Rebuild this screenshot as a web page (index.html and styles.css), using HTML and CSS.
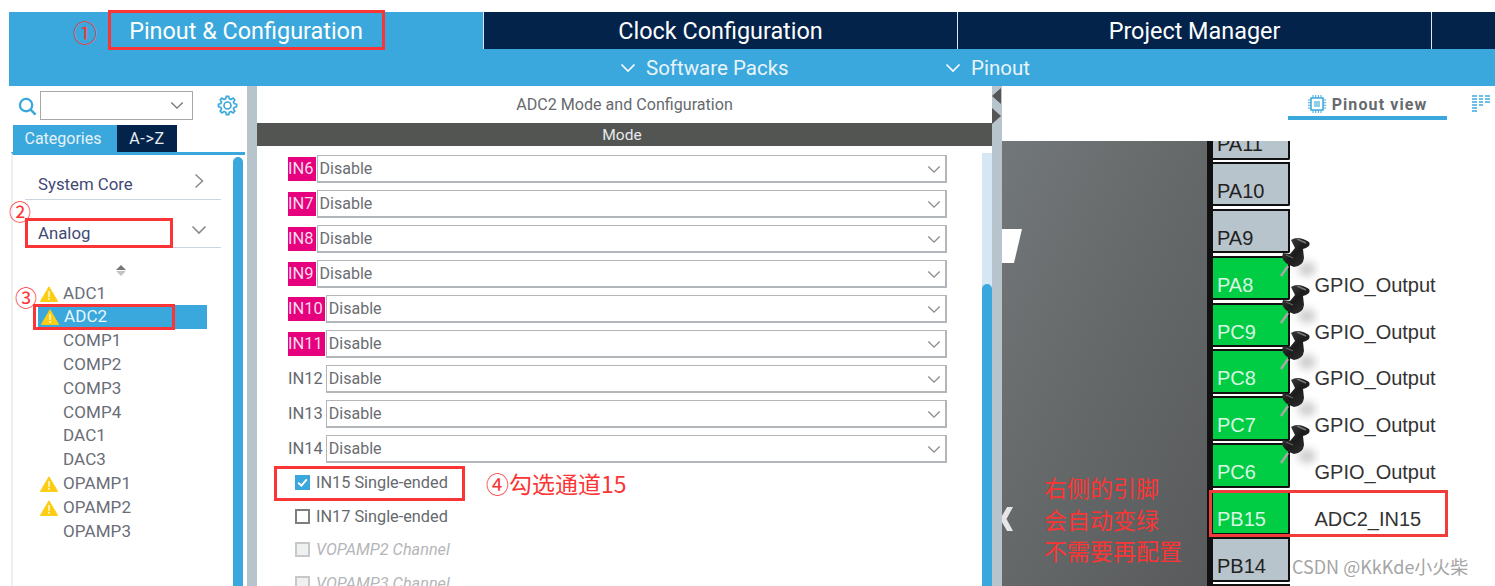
FILE: index.html
```html
<!DOCTYPE html>
<html lang="en">
<head>
<meta charset="utf-8">
<title>ADC2 Mode and Configuration</title>
<link rel="stylesheet" href="styles.css">
</head>
<body>
<svg class="defs" width="0" height="0" aria-hidden="true">
  <defs>
    <symbol id="chev" viewBox="0 0 16 10"><path d="M1.5 1.5 8 8l6.5-6.5" fill="none" stroke="currentColor" stroke-width="1.6"/></symbol>
    <symbol id="warn" viewBox="0 0 18 16"><path d="M9 .8 17.6 15.4H.4Z" fill="#fbcd14" stroke="#fbcd14" stroke-linejoin="round"/><rect x="8.1" y="5" width="1.8" height="6" fill="#fff3b8"/><rect x="8.1" y="12" width="1.8" height="1.8" fill="#fff3b8"/></symbol>
    <filter id="soft" x="-80%" y="-80%" width="260%" height="260%"><feGaussianBlur stdDeviation="4"/></filter>
    <linearGradient id="pinshade" x1="0" y1="0" x2="1" y2="1"><stop offset="0" stop-color="#4a4a4a"/><stop offset=".5" stop-color="#1c1c1c"/><stop offset="1" stop-color="#333"/></linearGradient>
    <symbol id="pushpin" viewBox="0 0 44 54">
      <ellipse cx="31" cy="33" rx="9" ry="7" fill="#8a8a8a" opacity=".45" filter="url(#soft)"/>
      <path d="M12 30 5 40" stroke="#a8a8a8" stroke-width="2.4"/>
      <path d="M15 4Q22-1 33 6Q35 10 30 12L27 13L28 22Q27 30 18 31Q8 28 6 21L7 17L14 18L19 12Z" fill="url(#pinshade)"/>
      <path d="M21 3 30 7" stroke="#777" stroke-width="1.4"/>
      <path d="M10 19 17 22" stroke="#666" stroke-width="1.2"/>
    </symbol>
  </defs>
</svg>

<header class="topbar">
  <nav class="tabs">
    <div class="tab tab-active">Pinout &amp; Configuration</div>
    <div class="tab tab-clock">Clock Configuration</div>
    <div class="tab tab-project">Project Manager</div>
    <div class="tab tab-rest"></div>
  </nav>
  <div class="subbar">
    <div class="sub sub-packs"><svg class="sub-chev"><use href="#chev"/></svg>Software Packs</div>
    <div class="sub"><svg class="sub-chev"><use href="#chev"/></svg>Pinout</div>
  </div>
</header>

<main class="main">
  <aside class="side">
    <div class="search">
      <svg class="search-icon" viewBox="0 0 20 20"><circle cx="8.500" cy="8.500" r="6.500" fill="none" stroke="#3aa8dc" stroke-width="2.400"/><path d="m13 13 5.500 5.500" stroke="#3aa8dc" stroke-width="2.600"/></svg>
      <div class="combo"><svg class="combo-chev"><use href="#chev"/></svg></div>
      <svg class="gear" viewBox="0 0 24 24"><path d="M12 1.500l1.300 0 .7 2.800 1.900.8 2.500-1.500 1.900 1.900-1.500 2.500.8 1.900 2.800.7v2.800l-2.800.7-.8 1.900 1.500 2.500-1.900 1.900-2.500-1.500-1.900.8-.7 2.800h-2.600l-.7-2.800-1.900-.8-2.500 1.500-1.900-1.900 1.500-2.500-.8-1.900-2.800-.7v-2.800l2.800-.7.800-1.900-1.500-2.500 1.900-1.900 2.500 1.500 1.900-.8.700-2.800Z" fill="none" stroke="#3aa8dc" stroke-width="1.900"/><circle cx="12" cy="12" r="4" fill="none" stroke="#3aa8dc" stroke-width="1.900"/></svg>
    </div>
    <div class="cat-tabs">
      <div class="cat cat-on">Categories</div>
      <div class="cat cat-off">A-&gt;Z</div>
    </div>
    <div class="side-body">
      <div class="side-list">
        <div class="group group-core">System Core<svg class="group-right" viewBox="0 0 10 16"><path d="M1.500 1.500 8.500 8l-7 6.500" fill="none" stroke="#8a8a8a" stroke-width="1.500"/></svg></div>
        <div class="group group-analog">Analog<svg class="group-down"><use href="#chev"/></svg></div>
        <div class="sorter"><span class="sort-up"></span><span class="sort-down"></span></div>
        <ul class="items">
          <li class="item"><svg class="warn"><use href="#warn"/></svg>ADC1</li>
          <li class="item item-on"><svg class="warn"><use href="#warn"/></svg>ADC2</li>
          <li class="item">COMP1</li>
          <li class="item">COMP2</li>
          <li class="item">COMP3</li>
          <li class="item">COMP4</li>
          <li class="item">DAC1</li>
          <li class="item">DAC3</li>
          <li class="item"><svg class="warn"><use href="#warn"/></svg>OPAMP1</li>
          <li class="item"><svg class="warn"><use href="#warn"/></svg>OPAMP2</li>
          <li class="item">OPAMP3</li>
        </ul>
      </div>
      <div class="side-scroll"></div>
    </div>
  </aside>

  <div class="gutter"></div>

  <section class="center">
    <h1 class="center-title">ADC2 Mode and Configuration</h1>
    <div class="mode-bar">Mode</div>
    <div class="mode-body">
      <div class="rows">
        <div class="row"><span class="in in-pink">IN6</span><div class="select">Disable<svg class="sel-chev"><use href="#chev"/></svg></div></div>
        <div class="row"><span class="in in-pink">IN7</span><div class="select">Disable<svg class="sel-chev"><use href="#chev"/></svg></div></div>
        <div class="row"><span class="in in-pink">IN8</span><div class="select">Disable<svg class="sel-chev"><use href="#chev"/></svg></div></div>
        <div class="row"><span class="in in-pink">IN9</span><div class="select">Disable<svg class="sel-chev"><use href="#chev"/></svg></div></div>
        <div class="row"><span class="in in-pink">IN10</span><div class="select">Disable<svg class="sel-chev"><use href="#chev"/></svg></div></div>
        <div class="row"><span class="in in-pink">IN11</span><div class="select">Disable<svg class="sel-chev"><use href="#chev"/></svg></div></div>
        <div class="row"><span class="in">IN12</span><div class="select">Disable<svg class="sel-chev"><use href="#chev"/></svg></div></div>
        <div class="row"><span class="in">IN13</span><div class="select">Disable<svg class="sel-chev"><use href="#chev"/></svg></div></div>
        <div class="row"><span class="in">IN14</span><div class="select">Disable<svg class="sel-chev"><use href="#chev"/></svg></div></div>
        <div class="check check-first"><span class="box box-on"><svg viewBox="0 0 14 14"><path d="M3 7.200 6 10l5-6" fill="none" stroke="#fff" stroke-width="1.800"/></svg></span>IN15 Single-ended</div>
        <div class="check"><span class="box"></span>IN17 Single-ended</div>
        <div class="check check-off"><span class="box box-off"></span>VOPAMP2 Channel</div>
        <div class="check check-off"><span class="box box-off"></span>VOPAMP3 Channel</div>
      </div>
      <div class="mode-scroll"><div class="mode-thumb"></div></div>
    </div>
  </section>

  <div class="gutter gutter-right">
    <span class="arrow-left"></span>
    <span class="arrow-right"></span>
  </div>

  <section class="pinout">
    <div class="pinout-head">
      <div class="view-tab">
        <svg class="chip-icon" viewBox="0 0 18 18"><rect x="3" y="3" width="12" height="12" fill="none" stroke="#3aa8dc" stroke-width="1.500"/><rect x="6" y="6" width="6" height="6" fill="#8fcfee"/><path d="M5 0v3M7.700 0v3M10.300 0v3M13 0v3M5 15v3M7.700 15v3M10.300 15v3M13 15v3M0 5h3M0 7.700h3M0 10.300h3M0 13h3M15 5h3M15 7.700h3M15 10.300h3M15 13h3" stroke="#3aa8dc"/></svg>
        Pinout view
      </div>
      <svg class="list-icon" viewBox="0 0 18 18"><path d="M0 1h5M7 1h4M13 1h5M0 4h5M7 4h4M13 4h5M0 7h5M7 7h4M13 7h5M0 10h5M7 10h4M0 13h5M0 16h5" stroke="#6cbfe8" stroke-width="2"/></svg>
    </div>
    <div class="canvas">
      <div class="chip">
        <span class="logo-piece"></span>
        <span class="chip-chevron"></span>
      </div>
      <div class="chip-edge"></div>
      <div class="pins">
        <div class="pinrow"><div class="pin">PA11</div></div>
        <div class="pinrow"><div class="pin">PA10</div></div>
        <div class="pinrow"><div class="pin">PA9</div></div>
        <div class="pinrow"><div class="pin pin-green">PA8</div><span class="signal">GPIO_Output</span><svg class="pushpin"><use href="#pushpin"/></svg></div>
        <div class="pinrow"><div class="pin pin-green">PC9</div><span class="signal">GPIO_Output</span><svg class="pushpin"><use href="#pushpin"/></svg></div>
        <div class="pinrow"><div class="pin pin-green">PC8</div><span class="signal">GPIO_Output</span><svg class="pushpin"><use href="#pushpin"/></svg></div>
        <div class="pinrow"><div class="pin pin-green">PC7</div><span class="signal">GPIO_Output</span><svg class="pushpin"><use href="#pushpin"/></svg></div>
        <div class="pinrow"><div class="pin pin-green">PC6</div><span class="signal">GPIO_Output</span><svg class="pushpin"><use href="#pushpin"/></svg></div>
        <div class="pinrow"><div class="pin pin-green">PB15</div><span class="signal">ADC2_IN15</span></div>
        <div class="pinrow"><div class="pin">PB14</div></div>
        <div class="pinrow"><div class="pin"></div></div>
      </div>
    </div>
  </section>
</main>

<div class="box-mark mark-1"></div>
<div class="box-mark mark-2"></div>
<div class="box-mark mark-3"></div>
<div class="box-mark mark-4"></div>
<div class="box-mark mark-5"></div>
<span class="note n1">①</span>
<span class="note n2">②</span>
<span class="note n3">③</span>
<span class="note n4">④勾选通道15</span>
<div class="note n5">右侧的引脚<br>会自动变绿<br>不需要再配置</div>
<div class="watermark">CSDN @KkKde小火柴</div>
</body>
</html>
```

FILE: styles.css
```css
* { box-sizing: border-box; }
html, body { margin: 0; padding: 0; }
body {
  position: relative;
  width: 1495px;
  height: 586px;
  overflow: hidden;
  background: #fff;
  font-family: Roboto, "Liberation Sans", sans-serif;
  color: #5f6368;
  padding-top: 12px;
}
.defs { position: absolute; }

/* header */
.topbar { margin-left: 9px; background: #3aa8dc; height: 74px; }
.tabs { display: flex; height: 37px; }
.tab {
  background: #03234b;
  color: #fff;
  font-size: 23.400px;
  line-height: 38px;
  text-align: center;
  border-left: 1px solid #dfe8ee;
}
.tab-active { width: 474px; background: #3aa8dc; border-left: 0; }
.tab-clock { width: 474px; }
.tab-project { width: 474px; }
.tab-rest { flex: 1; }
.subbar { display: flex; height: 37px; color: #e8f4fa; font-size: 20.500px; line-height: 38px; padding-left: 611px; }
.sub { display: flex; align-items: center; }
.sub-packs { width: 325px; }
.sub-chev { width: 16px; height: 10px; margin-right: 10px; color: #fff; }

/* layout */
.main {
  display: grid;
  grid-template-columns: 238px 10px 735px 10px 493px;
  grid-template-rows: 500px;
  margin-left: 9px;
  height: 500px;
}
.gutter { background: #b8c4cc; position: relative; }

/* sidebar */
.side { display: flex; flex-direction: column; min-width: 0; min-height: 0; overflow: hidden; }
.search { display: flex; align-items: center; height: 39px; padding-left: 9px; }
.search-icon { width: 19px; height: 19px; margin-right: 3px; margin-top: 1px; }
.combo {
  width: 153px;
  height: 29px;
  border: 1px solid #a7a7a7;
  display: flex;
  align-items: center;
  justify-content: flex-end;
  padding-right: 8px;
}
.combo-chev { width: 14px; height: 9px; color: #777; }
.gear { width: 21px; height: 21px; margin-left: 24px; }
.cat-tabs { display: flex; padding-left: 4px; height: 27px; }
.cat { height: 27px; line-height: 27px; font-size: 16px; text-align: center; }
.cat-on { width: 104px; padding-right: 4px; background: #3aa8dc; color: #e4f2fa; }
.cat-off { width: 60px; background: #03234b; color: #e8edf2; letter-spacing: .7px; }
.side-body {
  flex: 1;
  display: flex;
  min-height: 0;
  margin-left: 2px;
  border-top: 3px solid #3aa8dc;
  border-left: 2px solid #eef1f3;
  width: 234px;
}
.side-list { width: 209px; padding-left: 12px; min-width: 0; }
.group {
  position: relative;
  color: #3f4a75;
  font-size: 16.800px;
  border-bottom: 1px solid #c9d6e2;
  padding-left: 13px;
  display: flex;
  align-items: center;
  width: 196px;
}
.group-core { padding-top: 14px; height: 45px; }
.group-analog { height: 48px; padding-top: 19px; }
.group-right { position: absolute; right: 17px; top: 18px; width: 10px; height: 16px; }
.group-down { position: absolute; right: 14px; top: 25px; width: 16px; height: 10px; color: #8a8a8a; }
.sorter { display: flex; flex-direction: column; align-items: center; width: 192px; padding-top: 17px; height: 33.600px; gap: 1px; }
.sort-up { width: 0; height: 0; border: 5px solid transparent; border-top: 0; border-bottom: 5px solid #777; }
.sort-down { width: 0; height: 0; border: 5px solid transparent; border-bottom: 0; border-top: 5px solid #c4c4c4; }
.items { list-style: none; margin: 0; padding: 0; }
.item {
  position: relative;
  height: 23.800px;
  line-height: 23.800px;
  padding-left: 38px;
  font-size: 17px;
  letter-spacing: .1px;
  color: #6a6d78;
}
.item-on {
  background: #3aa8dc;
  color: #e9f5fb;
  margin-left: 13px;
  padding-left: 26px;
  width: 169px;
}
.warn { position: absolute; left: 15px; top: 4px; width: 18px; height: 16px; }
.item-on .warn { left: 3px; }
.side-scroll {
  width: 10px;
  margin-left: 11px;
  margin-top: 2px;
  background: #3aa8dc;
  border-radius: 5px 5px 0 0;
  flex: none;
}

/* center */
.center { display: flex; flex-direction: column; min-width: 0; min-height: 0; }
.center-title {
  margin: 0;
  height: 37px;
  font-size: 16.100px;
  font-weight: 400;
  line-height: 37px;
  text-align: center;
  color: #666a6e;
}
.mode-bar {
  height: 23px;
  background: #535553;
  color: #e8eaea;
  font-size: 15.500px;
  line-height: 25px;
  text-align: center;
  padding-right: 5px;
}
.mode-body { flex: 1; display: flex; min-height: 0; overflow: hidden; }
.rows { width: 725px; padding: 9px 0 0 31px; }
.row { display: flex; align-items: center; height: 35px; padding-bottom: 8px; }
.in {
  font-size: 16.500px;
  height: 24px;
  line-height: 24px;
  white-space: nowrap;
  color: #666a6e;
  padding-right: 2px;
  margin-right: 1px;
}
.in-pink { background: #e6007e; color: #f7dbe9; }
.select {
  position: relative;
  flex: none;
  height: 28px;
  width: 630px;
  border: 2px solid #b2b6ba;
  border-width: 1px 2px 2px 1px;
  padding-left: 2px;
  font-size: 16px;
  line-height: 26px;
  color: #6a6d72;
}
.row:nth-child(n+5) .select { width: 621px; }
.sel-chev { position: absolute; right: 4px; top: 9px; width: 14px; height: 9px; color: #8e8e8e; }
.check {
  display: flex;
  align-items: center;
  height: 33.500px;
  padding-left: 7px;
  font-size: 16.300px;
  color: #666a6e;
  gap: 6px;
}
.check-first { margin-top: -4px; }
.check-off { color: #b4b6b9; font-style: italic; }
.box { width: 15px; height: 15px; border: 2px solid #7e7e7e; flex: none; display: block; }
.box-on { border: 0; background: #3aa8dc; }
.box-on svg { display: block; width: 15px; height: 15px; }
.box-off { border-color: #c8c8c8; background: #eef0f2; }
.mode-scroll { width: 10px; margin-top: 7px; background: #d5e6f5; display: flex; flex-direction: column; justify-content: flex-end; }
.mode-thumb { height: 302px; background: #3aa8dc; border-radius: 5px 5px 0 0; }

/* arrows on right gutter */
.arrow-left, .arrow-right { position: absolute; width: 0; height: 0; border: 8px solid transparent; }
.arrow-left { left: 0; top: 2px; border-left: 0; border-right: 9px solid #555; }
.arrow-right { left: 0; top: 22px; border-right: 0; border-left: 9px solid #555; }

/* pinout */
.pinout { display: flex; flex-direction: column; min-width: 0; min-height: 0; }
.pinout-head { position: relative; height: 55px; display: flex; background: #fff; }
.view-tab {
  margin-left: 286px;
  width: 159px;
  height: 34px;
  padding-top: 6px;
  border-bottom: 4px solid #3aa8dc;
  display: flex;
  align-items: center;
  justify-content: center;
  gap: 6px;
  font-size: 16px;
  font-weight: 700;
  letter-spacing: 1.100px;
  color: #666a6e;
}
.chip-icon { width: 18px; height: 18px; }
.list-icon { width: 18px; height: 18px; margin-left: 25px; margin-top: 9px; }
.canvas { flex: 1; display: flex; min-height: 0; overflow: hidden; position: relative; }
.chip { width: 205px; background: linear-gradient(115deg, #72777a 0%, #656868 50%, #585a5b 100%); position: relative; flex: none; }
.logo-piece {
  position: absolute;
  left: 0;
  top: 88px;
  width: 20px;
  height: 34px;
  background: #fff;
  clip-path: polygon(0 0, 100% 0, 60% 100%, 0 100%);
}
.chip-chevron {
  position: absolute;
  left: -2px;
  top: 366px;
  width: 13px;
  height: 24px;
  background: #e6e6e6;
  clip-path: polygon(55% 0, 100% 0, 50% 50%, 100% 100%, 55% 100%, 0 50%);
}
.chip-edge { width: 6px; background: linear-gradient(90deg, #111 0%, #111 60%, #fff 60%, #fff 70%, #111 70%); flex: none; }
.pins { flex: 1; margin-top: -26px; }
.pinrow { position: relative; display: flex; height: 46.900px; }
.pin {
  width: 77px;
  height: 44.500px;
  background: #b8c4cc;
  border: 2px solid #111;
  border-left: 0;
  border-radius: 0 0 2px 0;
  padding: 15px 0 0 4px;
  font-family: "Liberation Sans", Arial, sans-serif;
  font-size: 20px;
  line-height: 24px;
  color: #222;
}
.pin-green { background: #00cc44; color: #d8f8e2; }
.signal {
  margin-left: 24.500px;
  padding-top: 17px;
  font-family: "Liberation Sans", Arial, sans-serif;
  font-size: 20px;
  line-height: 24px;
  color: #333;
  white-space: nowrap;
}
.pushpin { position: absolute; left: 63px; top: -20px; width: 44px; height: 54px; overflow: visible; }

/* annotations */
.box-mark { position: absolute; border: 3px solid #fb3535; }
.mark-1 { left: 108px; top: 10px; width: 277px; height: 40px; }
.mark-2 { left: 25px; top: 218px; width: 148px; height: 30px; }
.mark-3 { left: 33px; top: 304px; width: 142px; height: 26px; }
.mark-4 { left: 274px; top: 466px; width: 191px; height: 35px; }
.mark-5 { left: 1209px; top: 490px; width: 239px; height: 47px; border-color: #f23c3c; }
.note { position: absolute; color: #fb3535; font-family: "Noto Sans CJK SC", sans-serif; white-space: nowrap; }
.n1 { left: 73px; top: 15px; font-size: 24px; line-height: 34px; }
.n2 { left: 9px; top: 194px; font-size: 22px; line-height: 32px; }
.n3 { left: 15px; top: 280px; font-size: 22px; line-height: 32px; }
.n4 { left: 486px; top: 465px; font-size: 23px; line-height: 36px; }
.n5 { left: 1044px; top: 472px; font-size: 23px; line-height: 31.500px; }
.watermark {
  position: absolute;
  left: 1292px;
  top: 554px;
  font-family: "Noto Sans CJK SC", sans-serif;
  font-size: 18px;
  line-height: 24px;
  color: #a5a5a5;
  white-space: nowrap;
}
```
